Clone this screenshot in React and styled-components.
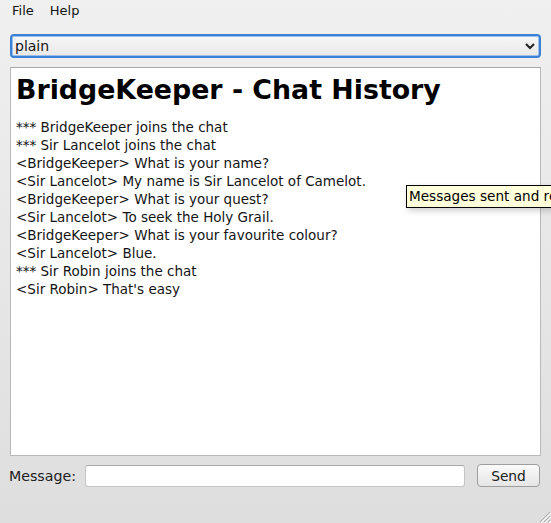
import React from "react";
import styled, { createGlobalStyle } from "styled-components";

const Global = createGlobalStyle`
  html, body { margin: 0; padding: 0; overflow: hidden; }
  body { font-family: "DejaVu Sans", "Liberation Sans", sans-serif; }
`;

const Window = styled.div`
  position: relative;
  width: 551px;
  height: 523px;
  overflow: hidden;
  background: linear-gradient(#f0f0f0, #dedede);
  display: flex;
  flex-direction: column;
  font-size: 13px;
  color: #141414;
`;

const MenuBar = styled.div`
  display: flex;
  height: 22px;
  align-items: center;
  padding-left: 4px;
`;

const MenuItem = styled.div`
  padding: 0 8px;
  font-size: 13px;
  line-height: 22px;
`;

const Body = styled.div`
  flex: 1;
  display: flex;
  flex-direction: column;
  padding: 12px 10px 0 10px;
`;

const Combo = styled.div`
  height: 20px;
  border: 2px solid #3c80d6;
  border-radius: 4px;
  background: linear-gradient(#f6f6f6, #e9e9e9);
  display: flex;
  align-items: center;
  justify-content: space-between;
  padding: 0 3px 0 3px;
  font-size: 14px;
  box-shadow: inset 0 0 0 1px #9cc0ee;
`;

const Chevron = styled.svg`
  width: 12px;
  height: 12px;
`;

const History = styled.div`
  margin-top: 9px;
  border: 1px solid #b9b9b9;
  border-top-color: #a9a9a9;
  background: #fff;
  padding: 5px 5px;
  box-sizing: border-box;
  height: 389px;
`;

const Heading = styled.h1`
  margin: 0 0 11px 0;
  font-family: "DejaVu Sans", sans-serif;
  font-weight: bold;
  font-size: 26.8px;
  line-height: 34px;
  color: #000;
`;

const Line = styled.div`
  font-size: 13.5px;
  line-height: 18px;
  white-space: pre;
  color: #141414;
`;

const Footer = styled.div`
  display: flex;
  align-items: center;
  margin-top: 8px;
  margin-left: -1px;
  margin-right: 1px;
`;

const Label = styled.span`
  font-size: 14.2px;
  color: #202020;
  margin-right: 9px;
`;

const Input = styled.div`
  flex: 1;
  height: 20px;
  border: 1px solid #c4c4c4;
  border-top-color: #a8a8a8;
  border-radius: 3px;
  background: #fff;
`;

const Button = styled.div`
  margin-left: 12px;
  width: 61px;
  height: 21px;
  border: 1px solid #9e9e9e;
  border-radius: 4px;
  background: linear-gradient(#fafafa, #e6e6e6);
  display: flex;
  align-items: center;
  justify-content: center;
  font-size: 13.8px;
  color: #202020;
`;

const Tooltip = styled.div`
  position: absolute;
  left: 406px;
  top: 185px;
  height: 21px;
  padding: 0 2px;
  border: 1px solid #000;
  background: #ffffdc;
  font-size: 13.6px;
  line-height: 21px;
  white-space: nowrap;
  color: #000;
  box-shadow: 2px 3px 6px rgba(0,0,0,0.18);
`;

const Grip = styled.svg`
  position: absolute;
  right: 0;
  bottom: 0;
  width: 14px;
  height: 14px;
`;

const lines = [
  "*** BridgeKeeper joins the chat",
  "*** Sir Lancelot joins the chat",
  "<BridgeKeeper> What is your name?",
  "<Sir Lancelot> My name is Sir Lancelot of Camelot.",
  "<BridgeKeeper> What is your quest?",
  "<Sir Lancelot> To seek the Holy Grail.",
  "<BridgeKeeper> What is your favourite colour?",
  "<Sir Lancelot> Blue.",
  "*** Sir Robin joins the chat",
  "<Sir Robin> That's easy",
];

export default function App() {
  return (
    <Window>
      <Global />
      <MenuBar>
        <MenuItem>File</MenuItem>
        <MenuItem>Help</MenuItem>
      </MenuBar>
      <Body>
        <Combo>
          <span>plain</span>
          <Chevron viewBox="0 0 12 12">
            <path d="M2 4 L6 8 L10 4" fill="none" stroke="#222" strokeWidth="2" />
          </Chevron>
        </Combo>
        <History>
          <Heading>BridgeKeeper - Chat History</Heading>
          {lines.map((l, i) => (
            <Line key={i}>{l}</Line>
          ))}
        </History>
        <Footer>
          <Label>Message:</Label>
          <Input />
          <Button>Send</Button>
        </Footer>
      </Body>
      <Tooltip>Messages sent and received</Tooltip>
      <Grip viewBox="0 0 14 14">
        <path d="M13 3 L3 13 M13 7 L7 13 M13 11 L11 13" stroke="#a8a8a8" strokeWidth="1" />
        <path d="M14 4 L4 14 M14 8 L8 14 M14 12 L12 14" stroke="#fff" strokeWidth="1" />
      </Grip>
    </Window>
  );
}
